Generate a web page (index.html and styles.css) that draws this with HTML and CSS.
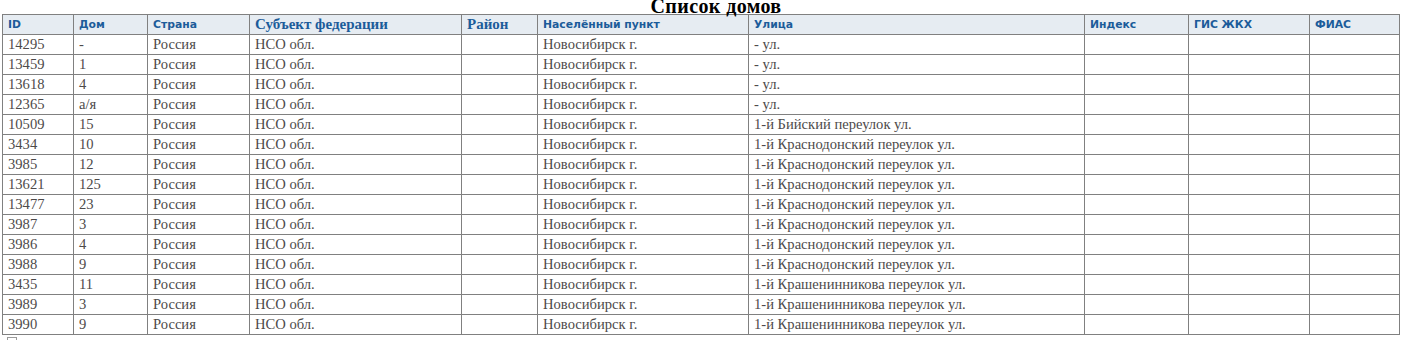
FILE: index.html
```html
<!DOCTYPE html>
<html lang="ru">
<head>
<meta charset="utf-8">
<title>Список домов</title>
<link rel="stylesheet" href="styles.css">
</head>
<body>
<div class="page">
  <div class="title">Список домов</div>
  <table class="houses">
    <colgroup>
      <col style="width:71px"><col style="width:74px"><col style="width:102px"><col style="width:212px"><col style="width:76px"><col style="width:211px"><col style="width:336px"><col style="width:104px"><col style="width:121px"><col style="width:90px">
    </colgroup>
    <thead>
      <tr>
        <th>ID</th><th>Дом</th><th>Страна</th><th class="alt">Субъект федерации</th><th class="alt">Район</th><th>Населённый пункт</th><th>Улица</th><th>Индекс</th><th>ГИС ЖКХ</th><th>ФИАС</th>
      </tr>
    </thead>
    <tbody>
      <tr><td>14295</td><td>-</td><td>Россия</td><td>НСО обл.</td><td></td><td>Новосибирск г.</td><td>- ул.</td><td></td><td></td><td></td></tr>
      <tr><td>13459</td><td>1</td><td>Россия</td><td>НСО обл.</td><td></td><td>Новосибирск г.</td><td>- ул.</td><td></td><td></td><td></td></tr>
      <tr><td>13618</td><td>4</td><td>Россия</td><td>НСО обл.</td><td></td><td>Новосибирск г.</td><td>- ул.</td><td></td><td></td><td></td></tr>
      <tr><td>12365</td><td>а/я</td><td>Россия</td><td>НСО обл.</td><td></td><td>Новосибирск г.</td><td>- ул.</td><td></td><td></td><td></td></tr>
      <tr><td>10509</td><td>15</td><td>Россия</td><td>НСО обл.</td><td></td><td>Новосибирск г.</td><td>1-й Бийский переулок ул.</td><td></td><td></td><td></td></tr>
      <tr><td>3434</td><td>10</td><td>Россия</td><td>НСО обл.</td><td></td><td>Новосибирск г.</td><td>1-й Краснодонский переулок ул.</td><td></td><td></td><td></td></tr>
      <tr><td>3985</td><td>12</td><td>Россия</td><td>НСО обл.</td><td></td><td>Новосибирск г.</td><td>1-й Краснодонский переулок ул.</td><td></td><td></td><td></td></tr>
      <tr><td>13621</td><td>125</td><td>Россия</td><td>НСО обл.</td><td></td><td>Новосибирск г.</td><td>1-й Краснодонский переулок ул.</td><td></td><td></td><td></td></tr>
      <tr><td>13477</td><td>23</td><td>Россия</td><td>НСО обл.</td><td></td><td>Новосибирск г.</td><td>1-й Краснодонский переулок ул.</td><td></td><td></td><td></td></tr>
      <tr><td>3987</td><td>3</td><td>Россия</td><td>НСО обл.</td><td></td><td>Новосибирск г.</td><td>1-й Краснодонский переулок ул.</td><td></td><td></td><td></td></tr>
      <tr><td>3986</td><td>4</td><td>Россия</td><td>НСО обл.</td><td></td><td>Новосибирск г.</td><td>1-й Краснодонский переулок ул.</td><td></td><td></td><td></td></tr>
      <tr><td>3988</td><td>9</td><td>Россия</td><td>НСО обл.</td><td></td><td>Новосибирск г.</td><td>1-й Краснодонский переулок ул.</td><td></td><td></td><td></td></tr>
      <tr><td>3435</td><td>11</td><td>Россия</td><td>НСО обл.</td><td></td><td>Новосибирск г.</td><td>1-й Крашенинникова переулок ул.</td><td></td><td></td><td></td></tr>
      <tr><td>3989</td><td>3</td><td>Россия</td><td>НСО обл.</td><td></td><td>Новосибирск г.</td><td>1-й Крашенинникова переулок ул.</td><td></td><td></td><td></td></tr>
      <tr><td>3990</td><td>9</td><td>Россия</td><td>НСО обл.</td><td></td><td>Новосибирск г.</td><td>1-й Крашенинникова переулок ул.</td><td></td><td></td><td></td></tr>
    </tbody>
  </table>
  <label class="footer-opt"><span class="box"></span><span class="opt-text">Все</span></label>
</div>
</body>
</html>
```
FILE: styles.css
```css
html, body {
  margin: 0;
  padding: 0;
  background: #ffffff;
}

.page {
  padding: 0 0 0 2px;
  font-family: "Liberation Serif", "Times New Roman", serif;
}

.title {
  height: 14px;
  line-height: 12px;
  padding-left: 30px;
  text-align: center;
  font-weight: bold;
  font-size: 20px;
  color: #000;
  width: 1398px;
  box-sizing: border-box;
  letter-spacing: 0.4px;
}

.houses {
  border-collapse: collapse;
  table-layout: fixed;
  width: 1398px;
}

.houses th,
.houses td {
  border: 1px solid #808080;
  height: 20px;
  padding: 0 0 0 5px;
  box-sizing: border-box;
  text-align: left;
  vertical-align: middle;
  white-space: nowrap;
  overflow: hidden;
}

.houses th {
  background: #e6ecf2;
  color: #1c5c9a;
  font-family: "DejaVu Sans", Verdana, sans-serif;
  font-weight: bold;
  font-size: 10.8px;
}

.houses th.alt {
  font-family: "Liberation Serif", "Times New Roman", serif;
  font-size: 15px;
}

.houses td {
  color: #4d4a4a;
  font-size: 14.6px;
}

.footer-opt {
  display: flex;
  align-items: flex-start;
  gap: 10px;
  padding: 2px 0 0 5px;
  color: #d0d0d0;
  font-size: 13px;
  line-height: 14px;
}

.box {
  width: 8px;
  height: 8px;
  border: 1px solid #9a9a9a;
  display: inline-block;
  flex: none;
}

.opt-text {
  padding-top: 1px;
}
```
